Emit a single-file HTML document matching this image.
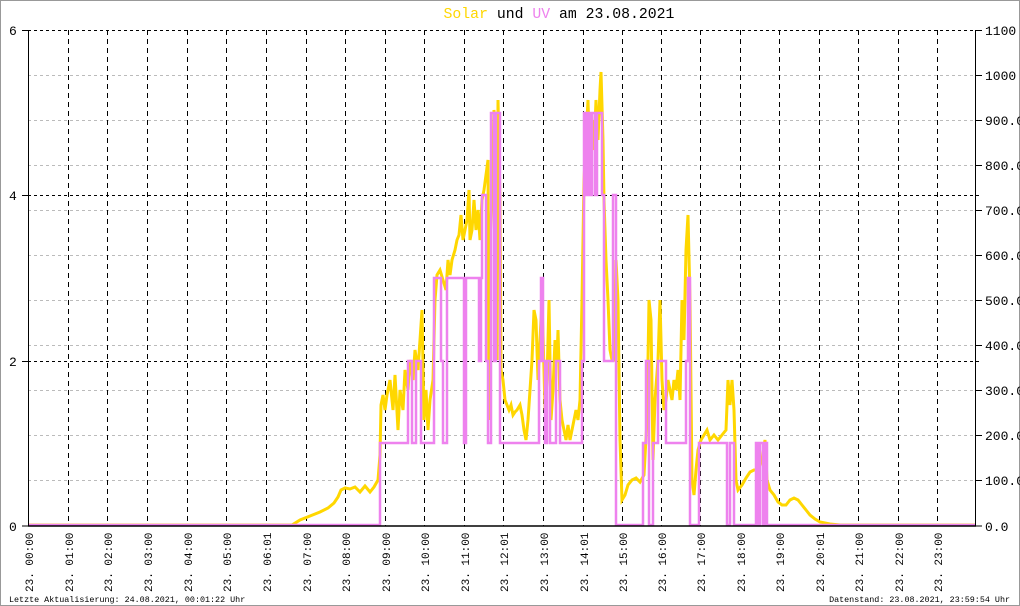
<!DOCTYPE html>
<html><head><meta charset="utf-8"><style>
html,body{margin:0;padding:0;background:#fff;}
svg{display:block;}
text{font-family:"Liberation Mono","DejaVu Sans Mono",monospace;}
</style></head><body>
<svg width="1020" height="606" viewBox="0 0 1020 606" xmlns="http://www.w3.org/2000/svg">
<rect x="0.5" y="0.5" width="1019" height="605" fill="#fff" stroke="#999" stroke-width="1"/>
<text x="559" y="18" font-size="14.8" text-anchor="middle"><tspan fill="#ffd700">Solar</tspan><tspan fill="#000"> und </tspan><tspan fill="#ee82ee">UV</tspan><tspan fill="#000"> am 23.08.2021</tspan></text>
<g stroke="#bbb" stroke-dasharray="3,3" stroke-width="1">
<line x1="28" x2="976" y1="75.5" y2="75.5"/><line x1="28" x2="976" y1="120.5" y2="120.5"/><line x1="28" x2="976" y1="165.5" y2="165.5"/><line x1="28" x2="976" y1="210.5" y2="210.5"/><line x1="28" x2="976" y1="255.5" y2="255.5"/><line x1="28" x2="976" y1="300.5" y2="300.5"/><line x1="28" x2="976" y1="345.5" y2="345.5"/><line x1="28" x2="976" y1="390.5" y2="390.5"/><line x1="28" x2="976" y1="435.5" y2="435.5"/><line x1="28" x2="976" y1="480.5" y2="480.5"/>
</g>
<g stroke="#000" stroke-dasharray="3,3" stroke-width="1">
<line x1="22" x2="982" y1="30.5" y2="30.5"/><line x1="22" x2="982" y1="195.5" y2="195.5"/><line x1="22" x2="982" y1="361.5" y2="361.5"/>
</g>
<g stroke="#000" stroke-dasharray="5,4" stroke-width="1">
<line x1="68.5" x2="68.5" y1="30" y2="526"/><line x1="107.5" x2="107.5" y1="30" y2="526"/><line x1="147.5" x2="147.5" y1="30" y2="526"/><line x1="187.5" x2="187.5" y1="30" y2="526"/><line x1="226.5" x2="226.5" y1="30" y2="526"/><line x1="266.5" x2="266.5" y1="30" y2="526"/><line x1="306.5" x2="306.5" y1="30" y2="526"/><line x1="345.5" x2="345.5" y1="30" y2="526"/><line x1="385.5" x2="385.5" y1="30" y2="526"/><line x1="424.5" x2="424.5" y1="30" y2="526"/><line x1="464.5" x2="464.5" y1="30" y2="526"/><line x1="503.5" x2="503.5" y1="30" y2="526"/><line x1="543.5" x2="543.5" y1="30" y2="526"/><line x1="583.5" x2="583.5" y1="30" y2="526"/><line x1="622.5" x2="622.5" y1="30" y2="526"/><line x1="661.5" x2="661.5" y1="30" y2="526"/><line x1="700.5" x2="700.5" y1="30" y2="526"/><line x1="740.5" x2="740.5" y1="30" y2="526"/><line x1="779.5" x2="779.5" y1="30" y2="526"/><line x1="819.5" x2="819.5" y1="30" y2="526"/><line x1="858.5" x2="858.5" y1="30" y2="526"/><line x1="898.5" x2="898.5" y1="30" y2="526"/><line x1="937.5" x2="937.5" y1="30" y2="526"/>
</g>
<polyline fill="none" stroke="#ffd700" stroke-width="3" stroke-linejoin="miter" points="28,525 292,525 300,520 310,516 320,512 328,508 334,503 338,497 341,490 345,488 350,489 355,487 360,492 365,486 370,492 374,487 378,480 380,455 381,405 383,395 385,410 387,395 390,380 393,410 395,375 398,430 400,390 403,410 405,370 408,390 410,360 413,380 415,350 418,370 420,340 422,310 424,420 426,390 428,430 430,400 433,380 435,300 437,275 440,270 443,280 446,290 448,260 450,275 452,260 455,250 457,240 459,235 461,215 463,240 465,230 467,220 469,190 470,240 472,230 474,200 476,230 478,210 480,240 482,200 484,190 486,175 488,160 489,420 490,240 492,200 494,110 496,150 497,360 498,100 500,200 501,370 503,380 505,400 507,405 509,410 511,405 513,415 515,412 517,410 520,405 522,415 524,430 526,440 528,420 530,390 532,360 534,310 536,320 538,380 540,340 542,300 544,370 545,410 547,380 549,300 551,420 553,390 555,340 557,360 558,330 560,400 562,420 564,430 566,440 568,425 570,440 572,430 574,420 576,410 578,420 580,400 582,300 584,180 586,140 588,100 590,170 592,120 594,150 596,100 598,140 600,90 601,72 603,140 604,200 606,260 608,300 610,350 612,360 614,360 616,260 618,300 620,440 622,500 625,495 628,485 632,480 636,478 640,482 644,475 647,420 649,300 651,320 653,460 655,400 658,360 660,300 662,380 664,410 666,400 668,380 670,390 672,400 674,380 676,390 678,370 680,400 682,300 684,340 686,250 688,215 690,300 692,480 694,495 696,470 698,450 701,440 704,435 707,430 710,440 714,435 718,440 722,435 726,430 728,380 730,405 732,380 734,410 736,480 738,490 742,485 746,478 750,472 754,470 758,470 762,460 765,440 767,480 770,490 774,495 778,502 782,505 786,505 790,500 794,498 798,500 802,505 806,510 810,515 815,519 820,522 830,524 840,525 976,525"/>
<path fill="none" stroke="#ee82ee" stroke-width="2.5" d="M28 525 H380 V443 H408 V361 H412 V443 H416 V361 H421 V443 H434 V278 H441 V361 H443 V443 H447 V278 H464 V443 H466 V278 H479 V361 H481 V278 H482 V195 H486 V361 H488 V443 H491 V113 H494 V361 H496 V113 H500 V443 H539 V361 H541 V278 H543 V361 H545 V443 H547 V361 H550 V443 H556 V361 H560 V443 H582 V361 H584 V113 H586 V195 H588 V113 H590 V195 H592 V113 H595 V195 H597 V113 H602 V195 H604 V361 H613 V195 H616 V525 H643 V443 H646 V361 H649 V525 H653 V443 H658 V361 H666 V443 H686 V361 H688 V278 H690 V525 H699 V443 H727 V525 H730 V443 H734 V525 H756 V443 H758 V525 H760 V443 H763 V525 H765 V443 H767 V525 H976"/>
<line x1="28.5" x2="28.5" y1="30" y2="526" stroke="#000" stroke-width="1"/>
<line x1="975.5" x2="975.5" y1="30" y2="526" stroke="#000" stroke-width="1"/>
<line x1="28" x2="976" y1="526" y2="526" stroke="#000" stroke-width="1.5"/>
<g stroke="#000"><line x1="22" x2="28" y1="30.5" y2="30.5"/><line x1="22" x2="28" y1="195.5" y2="195.5"/><line x1="22" x2="28" y1="361.5" y2="361.5"/><line x1="22" x2="28" y1="526" y2="526"/>
<line x1="976" x2="982" y1="30.5" y2="30.5"/><line x1="976" x2="982" y1="75.5" y2="75.5"/><line x1="976" x2="982" y1="120.5" y2="120.5"/><line x1="976" x2="982" y1="165.5" y2="165.5"/><line x1="976" x2="982" y1="210.5" y2="210.5"/><line x1="976" x2="982" y1="255.5" y2="255.5"/><line x1="976" x2="982" y1="300.5" y2="300.5"/><line x1="976" x2="982" y1="345.5" y2="345.5"/><line x1="976" x2="982" y1="390.5" y2="390.5"/><line x1="976" x2="982" y1="435.5" y2="435.5"/><line x1="976" x2="982" y1="480.5" y2="480.5"/><line x1="976" x2="982" y1="526" y2="526"/></g>
<g font-size="13" fill="#000">
<text x="9" y="35">6</text><text x="9" y="200">4</text><text x="9" y="366">2</text><text x="9" y="531">0</text>
<text x="985" y="35">1100</text><text x="985" y="80">1000</text><text x="985" y="125">900.0</text><text x="985" y="170">800.0</text><text x="985" y="215">700.0</text><text x="985" y="260">600.0</text><text x="985" y="305">500.0</text><text x="985" y="350">400.0</text><text x="985" y="395">300.0</text><text x="985" y="440">200.0</text><text x="985" y="485">100.0</text><text x="985" y="531">0.0</text>
</g>
<g font-size="11" fill="#000">
<text transform="translate(33,592) rotate(-90)">23. 00:00</text><text transform="translate(73,592) rotate(-90)">23. 01:00</text><text transform="translate(112,592) rotate(-90)">23. 02:00</text><text transform="translate(152,592) rotate(-90)">23. 03:00</text><text transform="translate(192,592) rotate(-90)">23. 04:00</text><text transform="translate(231,592) rotate(-90)">23. 05:00</text><text transform="translate(271,592) rotate(-90)">23. 06:01</text><text transform="translate(311,592) rotate(-90)">23. 07:00</text><text transform="translate(350,592) rotate(-90)">23. 08:00</text><text transform="translate(390,592) rotate(-90)">23. 09:00</text><text transform="translate(429,592) rotate(-90)">23. 10:00</text><text transform="translate(469,592) rotate(-90)">23. 11:00</text><text transform="translate(508,592) rotate(-90)">23. 12:01</text><text transform="translate(548,592) rotate(-90)">23. 13:00</text><text transform="translate(588,592) rotate(-90)">23. 14:01</text><text transform="translate(627,592) rotate(-90)">23. 15:00</text><text transform="translate(666,592) rotate(-90)">23. 16:00</text><text transform="translate(705,592) rotate(-90)">23. 17:00</text><text transform="translate(745,592) rotate(-90)">23. 18:00</text><text transform="translate(784,592) rotate(-90)">23. 19:00</text><text transform="translate(824,592) rotate(-90)">23. 20:01</text><text transform="translate(863,592) rotate(-90)">23. 21:00</text><text transform="translate(903,592) rotate(-90)">23. 22:00</text><text transform="translate(942,592) rotate(-90)">23. 23:00</text>
</g>
<text x="9" y="602" font-size="8.4" fill="#000">Letzte Aktualisierung: 24.08.2021, 00:01:22 Uhr</text>
<text x="1010" y="602" font-size="8.4" fill="#000" text-anchor="end">Datenstand: 23.08.2021, 23:59:54 Uhr</text>
</svg>
</body></html>
